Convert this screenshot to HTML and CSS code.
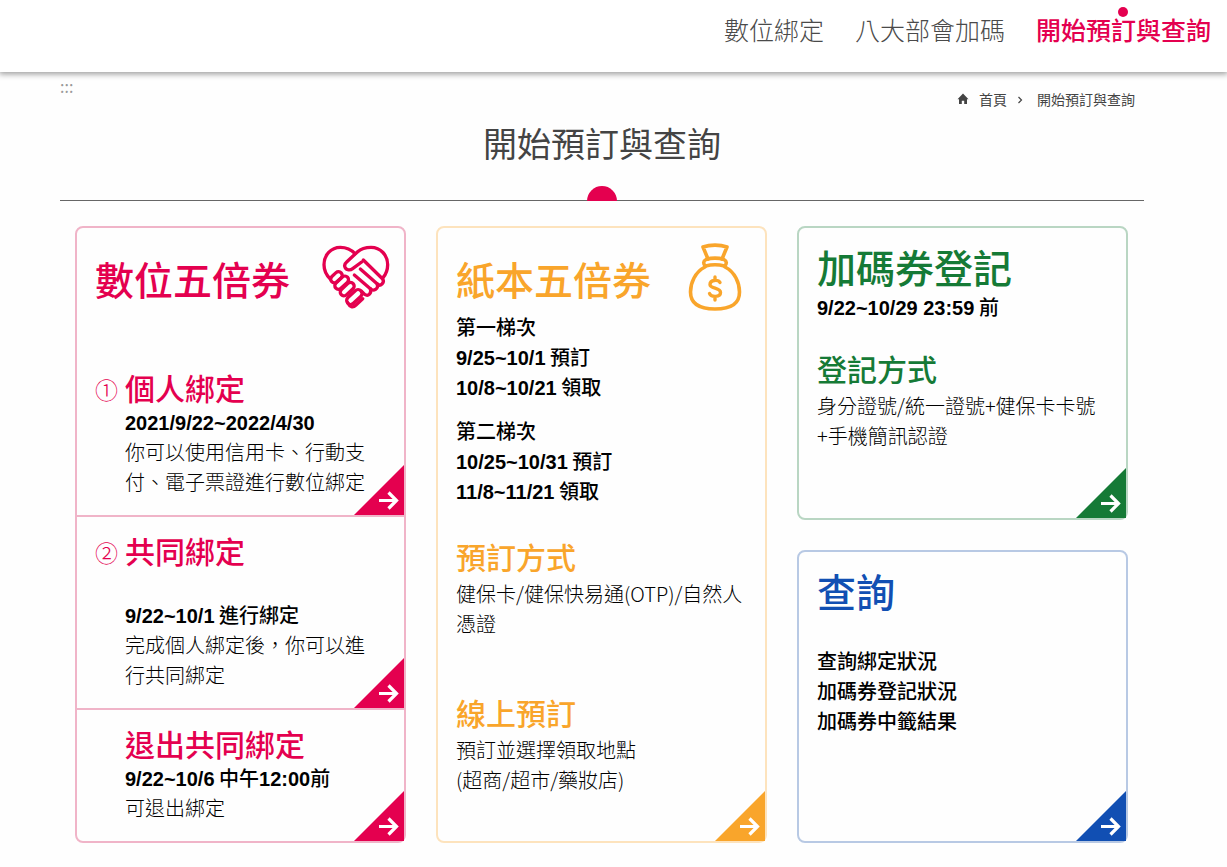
FILE: index.html
```html
<!DOCTYPE html>
<html lang="zh-Hant">
<head>
<meta charset="utf-8">
<meta name="viewport" content="width=device-width, initial-scale=1">
<title>開始預訂與查詢</title>
<link rel="stylesheet" href="styles.css">
</head>
<body>
<svg class="defs" aria-hidden="true">
  <symbol id="corner" viewBox="0 0 50 50">
    <path d="M50 0V50H0Z" fill="currentColor"/>
    <path d="M25 35.500H42M34.500 27.500L42.500 35.500L34.500 43.500" fill="none" stroke="#fff" stroke-width="3.200"/>
  </symbol>
</svg>
<header class="site-header">
  <nav class="site-nav">
    <a href="#digital">數位綁定</a>
    <a href="#bonus">八大部會加碼</a>
    <a href="#start" class="current" aria-current="page">開始預訂與查詢</a>
  </nav>
</header>
<main class="page" id="start">
  <div class="top-row">
    <a href="#start" class="access-key">:::</a>
    <nav class="breadcrumb">
      <svg class="home" viewBox="0 0 12 12" aria-hidden="true"><path d="M6 .5L11.500 6.200H10V11H7.200V7.800H4.800V11H2V6.200H.5Z" fill="currentColor"/></svg>
      <a href="#home">首頁</a>
      <svg class="chevron" viewBox="0 0 6 8" aria-hidden="true"><path d="M1.500 1L4.500 4L1.500 7" fill="none" stroke="currentColor" stroke-width="1.200"/></svg>
      <a href="#start">開始預訂與查詢</a>
    </nav>
  </div>
  <h1 class="page-title">開始預訂與查詢</h1>
  <div class="cards">
    <article class="card pink" id="digital">
      <section class="part first">
        <div class="card-head">
          <h2>數位五倍券</h2>
          <svg class="icon-heart" viewBox="36 45 204 192" fill="none" stroke="currentColor" stroke-width="10" stroke-linecap="round" stroke-linejoin="round" aria-hidden="true">
            <path d="M61 147C48 134 42 119 42 104C42 75 63 52 91 52C109 52 124 59 135 71"/>
            <path d="M155 96L128 116C120 122 110 120 106 114C102 107 104 101 110 96L143 65C153 56 168 52 183 52C212 52 233 76 233 104C233 119 228 132 219 143"/>
            <path d="M160 90L218 147C225 158 211 171 202 162L151 117"/>
            <path d="M202 162C206 176 191 186 181 176L133 135"/>
            <path d="M181 176C186 190 175 200 164 193L155 184"/>
            <rect x="60" y="131" width="39" height="22" rx="11" transform="rotate(-43 79 142)"/>
            <rect x="71" y="147" width="48" height="22" rx="11" transform="rotate(-43 95 158)"/>
            <rect x="87" y="166" width="49" height="22" rx="11" transform="rotate(-43 112 177)"/>
            <rect x="106" y="189" width="54" height="24" rx="12" transform="rotate(-43 133 201)"/>
            <path d="M113 218C120 231 128 235 138 225L158 206"/>
          </svg>
        </div>
        <div class="numbered">
          <span class="num">①</span>
          <div>
            <h3>個人綁定</h3>
            <p class="strong"><time>2021/9/22~2022/4/30</time></p>
            <p>你可以使用信用卡、行動支付、電子票證進行數位綁定</p>
          </div>
        </div>
        <a class="corner" href="#personal" aria-label="個人綁定"><svg><use href="#corner"/></svg></a>
      </section>
      <section class="part">
        <div class="numbered">
          <span class="num">②</span>
          <div>
            <h3 class="spaced">共同綁定</h3>
            <p class="strong"><time>9/22~10/1</time> 進行綁定</p>
            <p>完成個人綁定後，你可以進行共同綁定</p>
          </div>
        </div>
        <a class="corner" href="#joint" aria-label="共同綁定"><svg><use href="#corner"/></svg></a>
      </section>
      <section class="part">
        <div class="numbered">
          <span class="num"></span>
          <div>
            <h3>退出共同綁定</h3>
            <p class="strong"><time>9/22~10/6</time> 中午<time>12:00</time>前</p>
            <p>可退出綁定</p>
          </div>
        </div>
        <a class="corner" href="#leave" aria-label="退出共同綁定"><svg><use href="#corner"/></svg></a>
      </section>
    </article>

    <article class="card orange">
      <div class="card-head">
        <h2>紙本五倍券</h2>
        <svg class="icon-bag" viewBox="0 0 54 68" fill="none" stroke="currentColor" stroke-width="3.600" stroke-linecap="round" stroke-linejoin="round" aria-hidden="true">
          <path d="M20 16L15 4C22 1.500 32 1.500 39 4L34 16"/>
          <path d="M18 16.500C23 15 31 15 36 16.500C39 18 39 21 36.500 23C31 21.500 23 21.500 17.500 23C15 21 15 18 18 16.500Z"/>
          <path d="M17 24C7 29 2.500 40 2.500 49C2.500 61 11 66 27 66C43 66 51.500 61 51.500 49C51.500 40 47 29 37 24"/>
          <path d="M32 39.500C30.500 36.500 22 36.500 22 41.500C22 46 32.500 44.500 32.500 49.500C32.500 54.500 23 54.500 21.500 50.500M27 34V37M27 53.500V57" stroke-width="3.400"/>
        </svg>
      </div>
      <div class="strong batch">
        <p>第一梯次</p>
        <p><time>9/25~10/1</time> 預訂</p>
        <p><time>10/8~10/21</time> 領取</p>
      </div>
      <div class="strong batch">
        <p>第二梯次</p>
        <p><time>10/25~10/31</time> 預訂</p>
        <p><time>11/8~11/21</time> 領取</p>
      </div>
      <section class="block">
        <h3>預訂方式</h3>
        <p>健保卡/健保快易通(OTP)/自然人憑證</p>
      </section>
      <section class="block far">
        <h3>線上預訂</h3>
        <p>預訂並選擇領取地點<br>(超商/超市/藥妝店)</p>
      </section>
      <a class="corner" href="#paper" aria-label="紙本五倍券"><svg><use href="#corner"/></svg></a>
    </article>

    <div class="stack">
      <article class="card compact green" id="bonus">
        <h2>加碼券登記</h2>
        <p class="strong"><time>9/22~10/29 23:59</time> 前</p>
        <section class="block">
          <h3>登記方式</h3>
          <p>身分證號/統一證號+健保卡卡號+手機簡訊認證</p>
        </section>
        <a class="corner" href="#register" aria-label="加碼券登記"><svg><use href="#corner"/></svg></a>
      </article>
      <article class="card compact blue">
        <h2>查詢</h2>
        <div class="strong queries">
          <p>查詢綁定狀況</p>
          <p>加碼券登記狀況</p>
          <p>加碼券中籤結果</p>
        </div>
        <a class="corner" href="#query" aria-label="查詢"><svg><use href="#corner"/></svg></a>
      </article>
    </div>
  </div>
</main>
</body>
</html>
```

FILE: styles.css
```css
* {
  box-sizing: border-box;
  margin: 0;
  padding: 0;
}

body {
  background: #fefefe;
  color: #000;
  font-family: "Noto Sans CJK TC", "Noto Sans", sans-serif;
  font-size: 20px;
  font-weight: 300;
  line-height: 30px;
}

a {
  color: inherit;
  text-decoration: none;
}

.defs {
  position: absolute;
  width: 0;
  height: 0;
}

.site-header {
  background: #fff;
  box-shadow: 0 1px 6px 1px rgba(0, 0, 0, 0.4);
  padding: 11px 16px 25px;
}

.site-nav {
  display: flex;
  justify-content: flex-end;
  gap: 31px;
  color: #4a4a4a;
  font-size: 25px;
  line-height: 36px;
}

.site-nav .current {
  position: relative;
  color: #e4004f;
  font-weight: 500;
}

.site-nav .current::before {
  content: "";
  position: absolute;
  top: -4px;
  left: 50%;
  width: 10px;
  height: 10px;
  margin-left: -5px;
  border-radius: 50%;
  background: #e4004f;
}

.page {
  padding: 0 83px 24px 60px;
}

.top-row {
  display: flex;
  justify-content: space-between;
  height: 42px;
  padding-right: 9px;
  font-size: 14px;
}

.access-key {
  color: #999;
  font-size: 16px;
  font-weight: 400;
  line-height: 28px;
}

.breadcrumb {
  display: flex;
  align-items: center;
  color: #444;
  font-weight: 400;
  padding-top: 12px;
}

.home {
  width: 12px;
  height: 12px;
  margin-right: 10px;
}

.chevron {
  width: 6px;
  height: 8px;
  margin: 2px 14px 0 10px;
}

.page-title {
  position: relative;
  padding: 4px 0 32px;
  border-bottom: 1px solid #666;
  color: #444;
  font-size: 34px;
  font-weight: 400;
  line-height: 50px;
  text-align: center;
}

.page-title::after {
  content: "";
  position: absolute;
  bottom: -1px;
  left: 50%;
  width: 30px;
  height: 15px;
  margin-left: -15px;
  border-radius: 15px 15px 0 0;
  background: #e4004f;
}

.cards {
  display: grid;
  grid-template-columns: repeat(3, 1fr);
  gap: 30px;
  padding: 25px 16px 0 15px;
}

.card {
  position: relative;
  border: 2px solid;
  border-radius: 8px;
  padding: 0 18px 18px;
}

.pink {
  padding: 0;
  border-color: #f0b4c8;
}

.orange {
  border-color: #fde3bd;
}

.green {
  border-color: #b9d6c3;
}

.blue {
  border-color: #b8c9e4;
}

.pink h2, .pink h3, .pink .num, .pink .corner, .icon-heart {
  color: #e4004f;
}

.orange h2, .orange h3, .orange .corner, .icon-bag {
  color: #f9a52b;
}

.green h2, .green h3, .green .corner {
  color: #157a36;
}

.blue h2, .blue .corner {
  color: #114fb3;
}

.stack {
  display: flex;
  flex-direction: column;
  gap: 30px;
}

.stack .card {
  flex: 1;
}

.compact {
  padding-top: 14px;
}

.compact h2 {
  margin-bottom: 2px;
}

h2 {
  font-size: 39px;
  font-weight: 500;
  line-height: 48px;
}

h3 {
  margin-bottom: 2px;
  font-size: 30px;
  font-weight: 500;
  line-height: 36px;
}

.strong {
  font-weight: 500;
}

.strong time {
  font-family: "Liberation Sans", Arial, sans-serif;
  font-weight: 700;
  line-height: 20px;
}

.card-head {
  display: flex;
  justify-content: space-between;
  height: 84px;
  padding-top: 26px;
}

.icon-heart {
  width: 68px;
  height: 64px;
  margin: -9px -4px 0 0;
}

.icon-bag {
  width: 54px;
  height: 68px;
  margin: -11px 5px 0 0;
}

.part {
  position: relative;
  padding: 15px 18px 18px;
}

.part + .part {
  border-top: 2px solid #f0b4c8;
}

.first {
  padding-top: 0;
}

.first .card-head {
  margin-bottom: 57px;
}

.numbered {
  display: grid;
  grid-template-columns: 30px 1fr;
  padding-right: 18px;
}

.num {
  font-size: 23px;
  line-height: 41px;
}

.spaced {
  margin-bottom: 32px;
}

.batch + .batch {
  margin-top: 14px;
}

.block {
  margin-top: 32px;
}

.block h3 {
  margin-bottom: 5px;
}

.far {
  margin-top: 55px;
}

.green .block {
  margin-top: 28px;
}

.queries {
  margin-top: 32px;
}

.corner {
  position: absolute;
  right: 0;
  bottom: 0;
  width: 50px;
  height: 50px;
}

.corner svg {
  display: block;
  width: 50px;
  height: 50px;
}
```
